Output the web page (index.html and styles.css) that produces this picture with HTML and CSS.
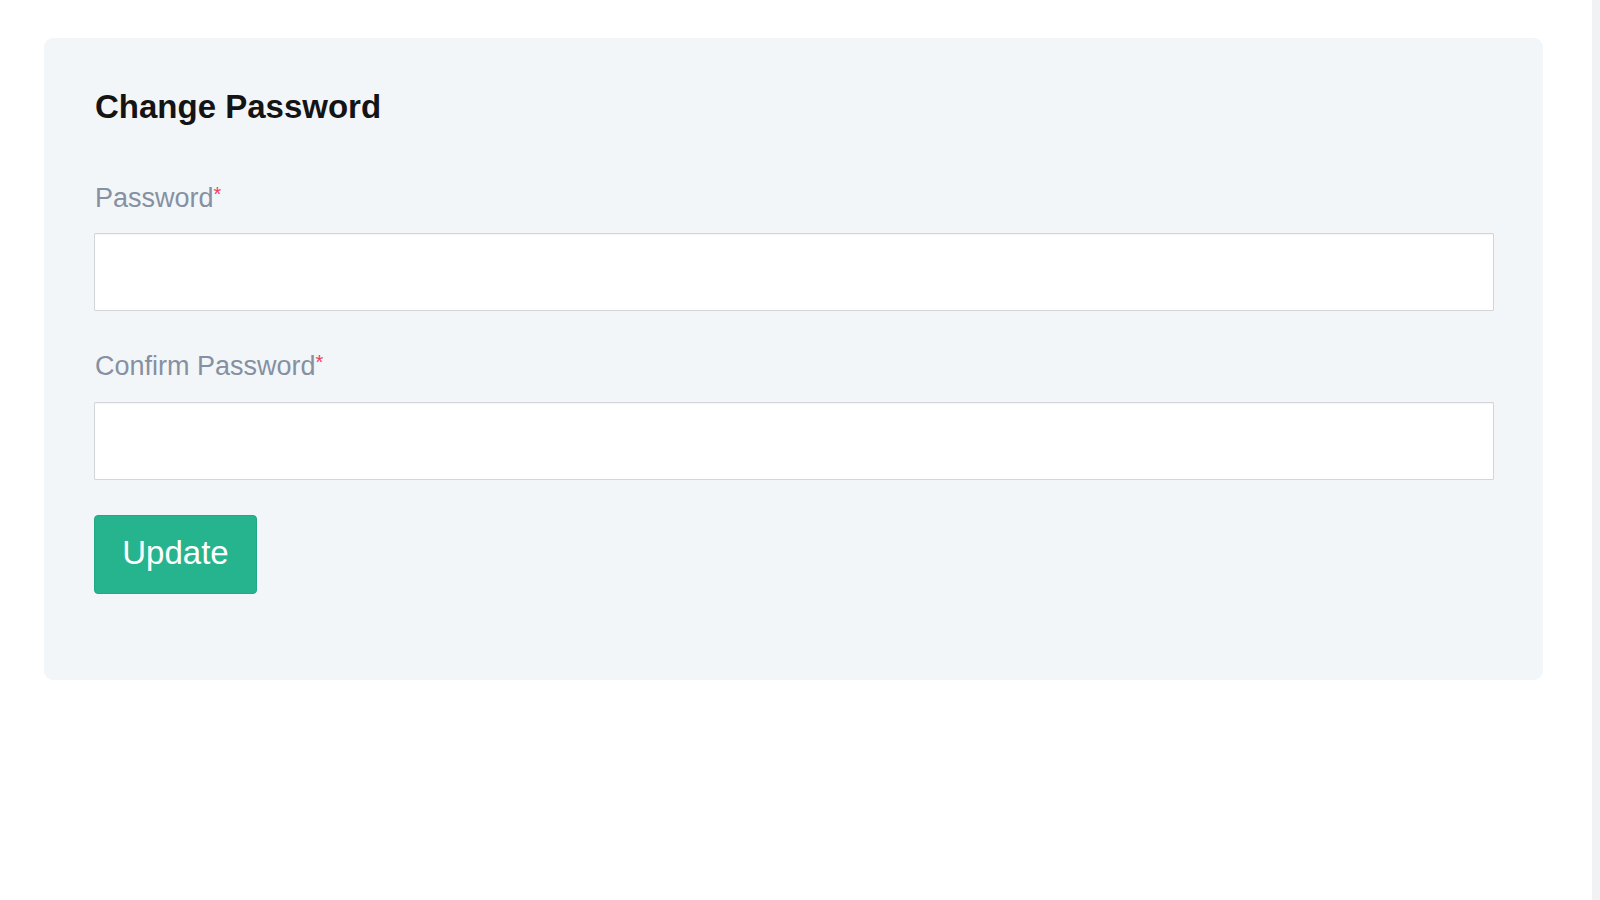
FILE: index.html
```html
<!DOCTYPE html>
<html lang="en">
<head>
<meta charset="utf-8">
<title>Change Password</title>
<link rel="stylesheet" href="styles.css">
</head>
<body>
<div class="page">
  <main class="main">
    <section class="card">
      <h1 class="title">Change Password</h1>
      <form class="form">
        <label class="label" for="pw">Password<span class="req">*</span></label>
        <input class="input" id="pw" type="password">
        <label class="label label-second" for="cpw">Confirm Password<span class="req">*</span></label>
        <input class="input" id="cpw" type="password">
        <button class="btn" type="button">Update</button>
      </form>
    </section>
  </main>
  <div class="scroll-track"></div>
</div>
</body>
</html>
```

FILE: styles.css
```css
html, body {
  margin: 0;
  padding: 0;
  background: #ffffff;
}
body {
  font-family: "Liberation Sans", Arial, sans-serif;
}
.page {
  display: flex;
  height: 900px;
}
.main {
  flex: 1;
  padding: 38px 49px 0 44px;
}
.scroll-track {
  width: 8px;
  background: #f1f2f3;
}
.card {
  background: #f2f6f9;
  border-radius: 9px;
  padding: 49px 49px 86px 50px;
}
.title {
  margin: 0;
  font-size: 33px;
  line-height: 40px;
  font-weight: bold;
  color: #141414;
  padding-left: 1px;
}
.form {
  display: flex;
  flex-direction: column;
  align-items: flex-start;
  margin-top: 55px;
}
.label {
  font-size: 27px;
  line-height: 32px;
  color: #8690a2;
  margin-bottom: 19px;
  padding-left: 1px;
}
.label-second {
  margin-top: 39px;
  margin-bottom: 20px;
}
.req {
  color: #f0405a;
  font-size: 20px;
  vertical-align: top;
  line-height: 24px;
}
.input {
  box-sizing: border-box;
  width: 100%;
  height: 78px;
  margin: 0;
  border: 1.5px solid #d3d5d8;
  border-radius: 1px;
  background: #ffffff;
  box-shadow: inset 0 1px 1px rgba(0,0,0,0.04);
  outline: none;
}
.btn {
  margin-top: 35px;
  width: 163px;
  height: 79px;
  background: #26b48f;
  border: 1px solid #21a884;
  border-radius: 4px;
  color: #ffffff;
  font-family: "Liberation Sans", Arial, sans-serif;
  font-size: 33px;
  line-height: 36px;
  padding: 0 0 3px 0;
}
```
